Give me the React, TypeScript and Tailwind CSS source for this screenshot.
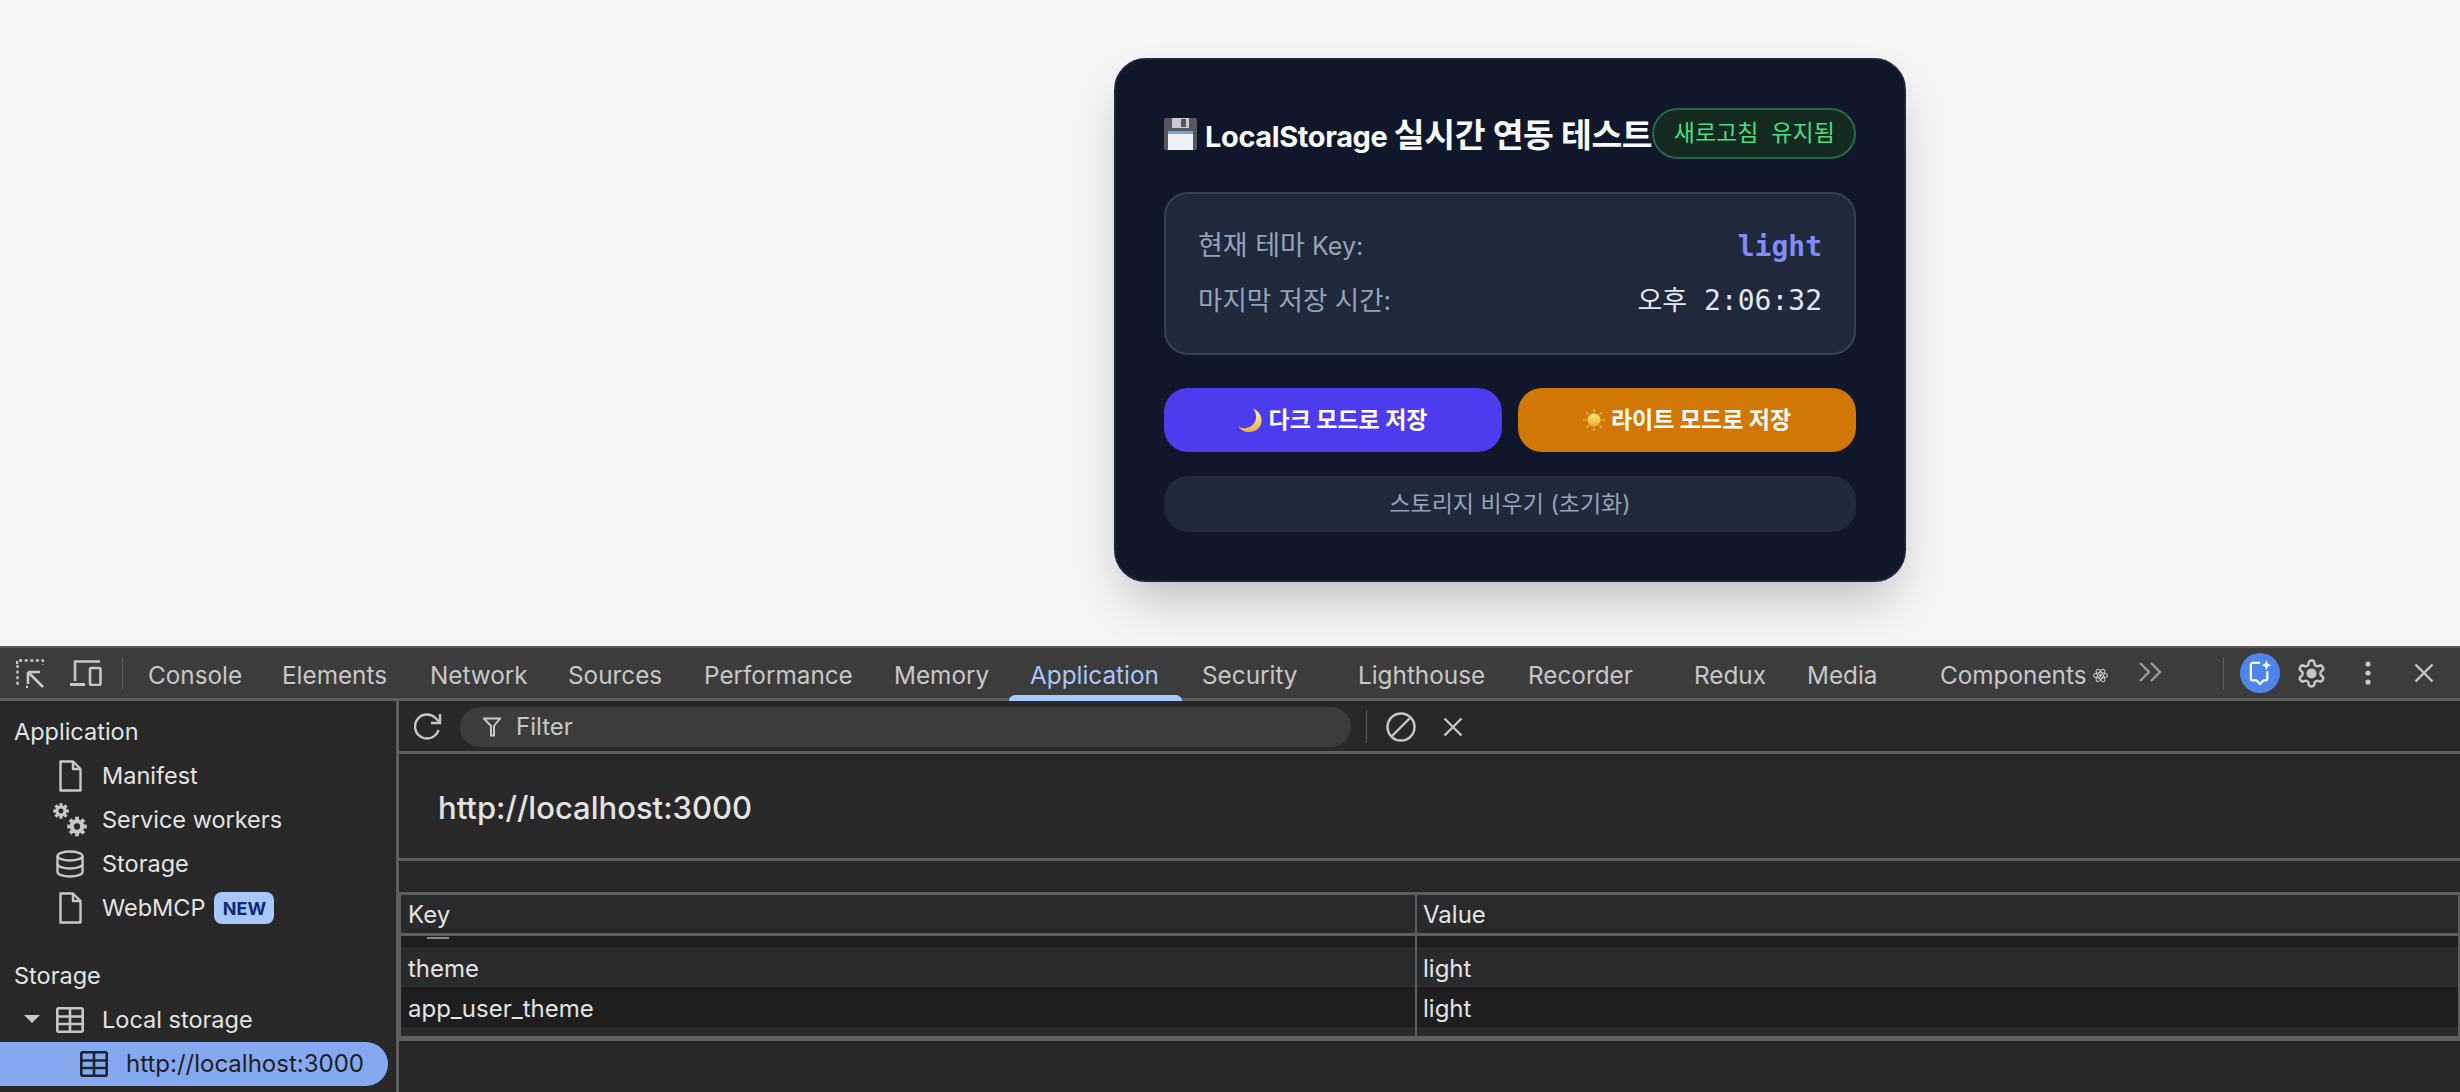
import React from "react";

const ui = "font-['Inter','Noto_Sans_CJK_KR',sans-serif]";
const mono = "font-['DejaVu_Sans_Mono','Noto_Sans_CJK_KR',monospace]";

const tabs = [
  { t: "Console", c: "w-[134px]" },
  { t: "Elements", c: "w-[148px]" },
  { t: "Network", c: "w-[138px]" },
  { t: "Sources", c: "w-[136px]" },
  { t: "Performance", c: "w-[190px]" },
  { t: "Memory", c: "w-[136px]" },
  { t: "Application", c: "w-[172px] text-[#a8c7fa]" },
  { t: "Security", c: "w-[156px]" },
  { t: "Lighthouse", c: "w-[170px]" },
  { t: "Recorder", c: "w-[166px]" },
  { t: "Redux", c: "w-[113px]" },
  { t: "Media", c: "w-[133px]" },
];

function Floppy() {
  return (
    <svg viewBox="0 0 33 32" className="w-[33px] h-[32px] shrink-0">
      <rect width="33" height="32" rx="1.5" fill="#55585e" />
      <rect x="8" y="0" width="17" height="10" fill="#c9ccd2" />
      <rect x="17" y="1" width="5" height="8" fill="#55585e" />
      <rect x="4" y="13" width="25" height="19" fill="#eef0f4" />
      <rect x="4" y="13" width="25" height="3" fill="#6fa3dc" />
    </svg>
  );
}
function Moon() {
  return (
    <svg viewBox="0 0 24 24" className="w-[24px] h-[24px] shrink-0">
      <defs>
        <linearGradient id="mg" x1="0" y1="0" x2="0" y2="1">
          <stop offset="0" stopColor="#fff3b0" />
          <stop offset="1" stopColor="#e8b33e" />
        </linearGradient>
      </defs>
      <path d="M15 0.5C21 3 24 8 23.5 13.5 23 20 17.5 24 11 24 6.5 24 2.5 22 0.5 18.5 2.5 20 5.5 20.5 8 20 14 19 18 14.5 18 9 18 5.5 17 3 15 0.5Z" fill="url(#mg)" />
    </svg>
  );
}
function Sun() {
  return (
    <svg viewBox="0 0 22 22" className="w-[22px] h-[22px] shrink-0">
      <defs>
        <linearGradient id="sg" x1="0" y1="0" x2="0" y2="1">
          <stop offset="0" stopColor="#ffe97a" />
          <stop offset="1" stopColor="#e9a93a" />
        </linearGradient>
      </defs>
      <g stroke="#f0c050" strokeWidth="1.2" strokeLinecap="round">
        <path d="M11 0.5v2.5M11 19v2.5M0.5 11H3M19 11h2.5M3.6 3.6l1.7 1.7M16.7 16.7l1.7 1.7M3.6 18.4l1.7-1.7M16.7 5.3l1.7-1.7" />
      </g>
      <circle cx="11" cy="11" r="6.5" fill="url(#sg)" />
    </svg>
  );
}
function Inspect() {
  return (
    <svg viewBox="0 0 28 29" className="w-[28px] h-[29px] shrink-0" fill="none" stroke="#c7c7c7" strokeWidth="2.4">
      <path d="M1 5V1.5H27V6" strokeDasharray="3 2.6" />
      <path d="M1.5 6V28" strokeDasharray="3 2.6" />
      <path d="M10 28H12" />
      <path d="M12 13H24M12 13V25M12.5 13.5L27 28" strokeWidth="2.6" />
    </svg>
  );
}
function Device() {
  return (
    <svg viewBox="0 0 32 26" className="w-[32px] h-[26px] shrink-0" fill="none" stroke="#c7c7c7" strokeWidth="2.6">
      <path d="M5 21V1.5H30" />
      <path d="M0 24.5H15" strokeWidth="3" />
      <rect x="20" y="8" width="10.5" height="17" rx="1.5" />
    </svg>
  );
}
function Filt() {
  return (
    <svg viewBox="0 0 18 20" className="w-[18px] h-[20px]" fill="none" stroke="#c7c7c7" strokeWidth="2">
      <path d="M1 1.5H17L11 9V18.5H8V9Z" />
    </svg>
  );
}
function Reload() {
  return (
    <svg viewBox="0 0 28 28" className="w-[28px] h-[28px]" fill="none" stroke="#c7c7c7" strokeWidth="2.4">
      <path d="M24.5 17A12 12 0 1 1 21.5 5L26 9.5" />
      <path d="M26 1V10H17" />
    </svg>
  );
}
function Block() {
  return (
    <svg viewBox="0 0 30 30" className="w-[30px] h-[30px]" fill="none" stroke="#c7c7c7" strokeWidth="2.4">
      <circle cx="15" cy="15" r="13.5" />
      <path d="M6 24L24 6" />
    </svg>
  );
}
function Close({ size }: { size: string }) {
  return (
    <svg viewBox="0 0 20 20" className={size} fill="none" stroke="#c7c7c7" strokeWidth="2.4">
      <path d="M1.5 1.5L18.5 18.5M18.5 1.5L1.5 18.5" />
    </svg>
  );
}
function Chevrons() {
  return (
    <svg viewBox="0 0 24 20" className="w-[24px] h-[20px] mt-[-2px] shrink-0" fill="none" stroke="#9a9a9a" strokeWidth="2.4">
      <path d="M2 1L11 10L2 19M13 1L22 10L13 19" />
    </svg>
  );
}
function Atom() {
  return (
    <svg viewBox="0 0 14 14" className="w-[15px] h-[15px] ml-[7px] shrink-0" fill="none" stroke="#c7c7c7" strokeWidth="1">
      <ellipse cx="7" cy="7" rx="6.4" ry="2.5" />
      <ellipse cx="7" cy="7" rx="6.4" ry="2.5" transform="rotate(60 7 7)" />
      <ellipse cx="7" cy="7" rx="6.4" ry="2.5" transform="rotate(120 7 7)" />
      <circle cx="7" cy="7" r="1.3" fill="#c7c7c7" stroke="none" />
    </svg>
  );
}
function Ai() {
  return (
    <div className="w-[40px] h-[40px] rounded-full bg-[#4d86e8] flex items-center justify-center shrink-0">
      <svg viewBox="0 0 24 28" className="w-[22px] h-[26px]" fill="none" stroke="#ffffff" strokeWidth="2.4">
        <path d="M12 3H4a2 2 0 0 0-2 2v15a2 2 0 0 0 2 2h4l4 4 4-4h2a2 2 0 0 0 2-2V12" />
        <path d="M19 0l1.6 4 3.4 1.5-3.4 1.5-1.6 4-1.6-4L14 5.5 17.4 4Z" fill="#ffffff" stroke="none" />
      </svg>
    </div>
  );
}
function Gear() {
  return (
    <svg viewBox="0 0 24 24" className="w-[31px] h-[31px] shrink-0" fill="none" stroke="#c7c7c7" strokeWidth="1.9" strokeLinejoin="round">
      <path d="M12.22 2h-.44a2 2 0 0 0-2 2v.18a2 2 0 0 1-1 1.73l-.43.25a2 2 0 0 1-2 0l-.15-.08a2 2 0 0 0-2.73.73l-.22.38a2 2 0 0 0 .73 2.73l.15.1a2 2 0 0 1 1 1.72v.51a2 2 0 0 1-1 1.74l-.15.09a2 2 0 0 0-.73 2.73l.22.38a2 2 0 0 0 2.73.73l.15-.08a2 2 0 0 1 2 0l.43.25a2 2 0 0 1 1 1.73V20a2 2 0 0 0 2 2h.44a2 2 0 0 0 2-2v-.18a2 2 0 0 1 1-1.73l.43-.25a2 2 0 0 1 2 0l.15.08a2 2 0 0 0 2.73-.73l.22-.39a2 2 0 0 0-.73-2.73l-.15-.08a2 2 0 0 1-1-1.74v-.5a2 2 0 0 1 1-1.74l.15-.09a2 2 0 0 0 .73-2.73l-.22-.38a2 2 0 0 0-2.73-.73l-.15.08a2 2 0 0 1-2 0l-.43-.25a2 2 0 0 1-1-1.73V4a2 2 0 0 0-2-2z" />
      <circle cx="12" cy="12" r="3" fill="#c7c7c7" />
    </svg>
  );
}
function Dots() {
  return (
    <svg viewBox="0 0 6 24" className="w-[6px] h-[24px] shrink-0" fill="#c7c7c7">
      <circle cx="3" cy="3" r="2.6" />
      <circle cx="3" cy="12" r="2.6" />
      <circle cx="3" cy="21" r="2.6" />
    </svg>
  );
}
function FileIco() {
  return (
    <svg viewBox="0 0 24 32" className="w-[24px] h-[32px]" fill="none" stroke="#c7c7c7" strokeWidth="2.4" strokeLinejoin="round">
      <path d="M2.5 1.5H15L22.5 9V30.5H2.5Z" />
      <path d="M15 1.5V9H22.5" />
    </svg>
  );
}
function Gears() {
  const g = (cx: number, cy: number, r: number, t: number) => (
    <g>
      {[0, 45, 90, 135, 180, 225, 270, 315].map((a) => (
        <rect key={a} x={cx - t / 2} y={cy - r} width={t} height={r * 0.5} fill="#c7c7c7" transform={`rotate(${a} ${cx} ${cy})`} />
      ))}
      <circle cx={cx} cy={cy} r={r * 0.53} fill="none" stroke="#c7c7c7" strokeWidth={r * 0.42} />
    </g>
  );
  return (
    <svg viewBox="0 0 34 34" className="w-[34px] h-[34px]">
      {g(8, 8, 7.8, 3.2)}
      {g(24, 23.5, 9.8, 3.8)}
    </svg>
  );
}
function Db() {
  return (
    <svg viewBox="0 0 28 28" className="w-[28px] h-[28px]" fill="none" stroke="#c7c7c7" strokeWidth="2.4">
      <ellipse cx="14" cy="6" rx="12.5" ry="4.5" />
      <path d="M1.5 6V22C1.5 24.5 7 26.5 14 26.5S26.5 24.5 26.5 22V6" />
      <path d="M1.5 14C1.5 16.5 7 18.5 14 18.5S26.5 16.5 26.5 14" />
    </svg>
  );
}
function TableIco({ dark }: { dark?: boolean }) {
  const c = dark ? "#1f2430" : "#c7c7c7";
  return (
    <svg viewBox="0 0 28 26" className="w-[28px] h-[26px]" fill="none" stroke={c} strokeWidth="2.6" strokeLinejoin="round">
      <rect x="1.3" y="1.3" width="25.4" height="23.4" rx="1.5" />
      <path d="M1.3 9.5H26.7M1.3 17H26.7M14 1.3V24.7" />
    </svg>
  );
}

function SideIcon({ children }: { children: React.ReactNode }) {
  return (
    <div className="w-[102px] pl-[52px] shrink-0">
      <div className="w-[36px] flex justify-center">{children}</div>
    </div>
  );
}

function SideRow({ icon, children }: { icon: React.ReactNode; children: React.ReactNode }) {
  return (
    <div className="h-[44px] flex items-center">
      <SideIcon>{icon}</SideIcon>
      {children}
    </div>
  );
}

export default function App() {
  return (
    <div className={`w-[2460px] h-[1092px] overflow-hidden flex flex-col bg-[#f5f5f5] ${ui}`}>
      <div className="h-[646px] shrink-0 pl-[1114px] pt-[58px]">
        <div className="w-[792px] h-[524px] rounded-[32px] bg-[#10172a] border-2 border-[#1c2539] px-[48px] pt-[48px] shadow-[0_25px_50px_-12px_rgba(0,0,0,0.25)]">
          <div className="h-[51px] flex items-center justify-between">
            <div className="flex items-center gap-[8px] whitespace-nowrap">
              <Floppy />
              <span className="pt-[3px] font-bold text-[#f8fafc] text-[29px] tracking-[-0.4px]">
                LocalStorage <span className="text-[33.5px] tracking-[-0.4px]">실시간 연동 테스트</span>
              </span>
            </div>
            <div className="h-[51px] w-[204px] shrink-0 rounded-full bg-[#14291f] border-2 border-[#24684a] flex items-center justify-center text-[23px] text-[#4ade80] whitespace-pre">
              새로고침  유지됨
            </div>
          </div>
          <div className="mt-[33px] h-[163px] rounded-[24px] bg-[#1f293b] border-2 border-[#334155] px-[32px] flex flex-col justify-center gap-[20px]">
            <div className="h-[34px] flex items-center justify-between">
              <span className="text-[25px] text-[#94a3b8]">
                <span className="text-[27px]">현재 테마</span> Key:
              </span>
              <span className={`text-[28px] font-bold text-[#818cf8] ${mono}`}>light</span>
            </div>
            <div className="h-[34px] flex items-center justify-between">
              <span className="text-[26.5px] text-[#94a3b8]">마지막 저장 시간:</span>
              <span className={`text-[28px] text-[#e2e8f0] ${mono}`}>
                <span className="text-[27px]">오후</span> 2:06:32
              </span>
            </div>
          </div>
          <div className="mt-[33px] grid grid-cols-2 gap-[16px]">
            <div className="h-[64px] rounded-[24px] bg-[#4d3bee] flex items-center justify-center gap-[6px] text-[23px] font-bold text-white">
              <Moon />
              다크 모드로 저장
            </div>
            <div className="h-[64px] rounded-[24px] bg-[#d17706] flex items-center justify-center gap-[6px] text-[23px] font-bold text-white">
              <Sun />
              라이트 모드로 저장
            </div>
          </div>
          <div className="mt-[24px] h-[56px] rounded-[24px] bg-[#1f293b] flex items-center justify-center text-[23px] text-[#94a3b8]">
            스토리지 비우기 (초기화)
          </div>
        </div>
      </div>

      <div className="h-[446px] shrink-0 flex flex-col bg-[#282828]">
        <div className="h-[55px] shrink-0 bg-[#3c3c3c] border-t-2 border-t-[#5a5a5a] border-b-[3px] border-b-[#5e5e5e] flex items-center pl-[16px] text-[24.3px] text-[#c7c7c7] relative">
          <Inspect />
          <div className="w-[26px] shrink-0" />
          <Device />
          <div className="w-[20px] shrink-0" />
          <div className="w-px h-[32px] bg-[#5e5e5e] shrink-0" />
          <div className="w-[25px] shrink-0" />
          {tabs.map((x) => (
            <div key={x.t} className={`shrink-0 pt-[5px] ${x.c}`}>
              {x.t}
            </div>
          ))}
          <div className="shrink-0 w-[198px] pt-[5px] flex items-center whitespace-nowrap">
            Components
            <Atom />
          </div>
          <Chevrons />
          <div className="w-[61px] shrink-0" />
          <div className="w-px h-[32px] bg-[#5e5e5e] shrink-0" />
          <div className="w-[16px] shrink-0" />
          <Ai />
          <div className="w-[16px] shrink-0" />
          <Gear />
          <div className="w-[38px] shrink-0" />
          <Dots />
          <div className="w-[43px] shrink-0" />
          <Close size="w-[20px] h-[20px] shrink-0" />
          <div className="absolute left-[1009px] bottom-[-3px] w-[173px] h-[6px] rounded-t-[6px] bg-[#a8c7fa]" />
        </div>

        <div className="flex-1 min-h-0 flex">
          <div className="w-[396px] shrink-0 pt-[9px] text-[23.5px] text-[#e3e3e3]">
            <div className="h-[44px] flex items-center pl-[14px]">Application</div>
            <SideRow icon={<FileIco />}>Manifest</SideRow>
            <SideRow icon={<Gears />}>Service workers</SideRow>
            <SideRow icon={<Db />}>Storage</SideRow>
            <SideRow icon={<FileIco />}>
              WebMCP
              <span className="ml-[9px] w-[60px] h-[32px] rounded-[8px] bg-[#a8c7fa] text-[#0f2a6e] text-[18px] font-bold flex items-center justify-center">NEW</span>
            </SideRow>
            <div className="h-[24px]" />
            <div className="h-[44px] flex items-center pl-[14px]">Storage</div>
            <div className="h-[44px] flex items-center relative">
              <svg viewBox="0 0 16 8" className="w-[16px] h-[8px] absolute left-[24px] top-[17px]" fill="#c7c7c7">
                <path d="M0 0H16L8 8Z" />
              </svg>
              <SideIcon>
                <TableIco />
              </SideIcon>
              Local storage
            </div>
            <div className="h-[44px] w-[388px] rounded-r-full bg-[#85a9f0] text-[24px] text-[#1f1f1f] flex items-center">
              <div className="w-[126px] pl-[80px] shrink-0">
                <TableIco dark />
              </div>
              http://localhost:3000
            </div>
          </div>

          <div className="flex-1 min-w-0 border-l-[3px] border-l-[#5e5e5e] flex flex-col text-[#e3e3e3]">
            <div className="h-[53px] shrink-0 border-b-[3px] border-b-[#5e5e5e] flex items-center pt-[2px] pl-[15px]">
              <Reload />
              <div className="ml-[18px] w-[891px] h-[40px] rounded-full bg-[#3c3c3c] flex items-center pl-[23px] gap-[15px] text-[24px] text-[#c7c7c7]">
                <Filt />
                Filter
              </div>
              <div className="ml-[15px] w-px h-[32px] bg-[#5e5e5e]" />
              <div className="ml-[19px]">
                <Block />
              </div>
              <div className="ml-[27px]">
                <Close size="w-[20px] h-[20px]" />
              </div>
            </div>
            <div className="h-[107px] shrink-0 border-b-[3px] border-b-[#5e5e5e] flex items-center pt-[4px] pl-[39px] text-[31px] font-medium text-[#e3e3e3]">
              http://localhost:3000
            </div>
            <div className="h-[31px] shrink-0" />
            <div className="h-[149px] shrink-0 border-[#5e5e5e] border-t-[3px] border-l-2 border-r-2 border-b-[5px] flex flex-col text-[24px] bg-[#292a2c] relative">
              <div className="h-[41px] shrink-0 border-b-[3px] border-b-[#5e5e5e] grid grid-cols-[1014px_1fr] items-center pt-[2px]">
                <div className="pl-[7px]">Key</div>
                <div className="pl-[8px]">Value</div>
              </div>
              <div className="h-[11px] shrink-0 bg-[#1e1e1e] flex items-start pl-[26px] pt-px">
                <div className="w-[22px] h-[2px] bg-[#8a8a8a]" />
              </div>
              <div className="h-[40px] shrink-0 grid grid-cols-[1014px_1fr] items-center pt-[3px] bg-[#292a2c]">
                <div className="pl-[7px]">theme</div>
                <div className="pl-[8px]">light</div>
              </div>
              <div className="h-[40px] shrink-0 grid grid-cols-[1014px_1fr] items-center pt-[3px] bg-[#1e1e1e]">
                <div className="pl-[7px]">app_user_theme</div>
                <div className="pl-[8px]">light</div>
              </div>
              <div className="absolute left-[1014px] top-0 bottom-0 w-[2px] bg-[#5e5e5e]" />
            </div>
          </div>
        </div>
      </div>
    </div>
  );
}
